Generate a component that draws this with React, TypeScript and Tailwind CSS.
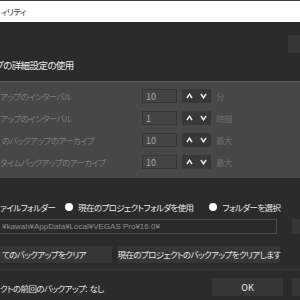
import React from "react";

const rows = [
  { label: "アップのインターバル", value: "10", unit: "分" },
  { label: "アップのインターバル", value: "1", unit: "時間" },
  { label: "のバックアップのアーカイブ", value: "10", unit: "最大", pad: "pl-[2px]" },
  { label: "タイムバックアップのアーカイブ", value: "10", unit: "最大" },
];

function Spinner() {
  return (
    <div className="flex h-[14px] w-[29px] items-center justify-around bg-[#383838]">
      <svg width="7" height="6" viewBox="0 0 7 6">
        <path d="M1 5 L3.5 1.2 L6 5" fill="none" stroke="#ececec" strokeWidth="1.5" />
      </svg>
      <svg width="7" height="6" viewBox="0 0 7 6">
        <path d="M1 1 L3.5 4.8 L6 1" fill="none" stroke="#ececec" strokeWidth="1.5" />
      </svg>
    </div>
  );
}

function Radio({ label }: { label: string }) {
  return (
    <div className="flex shrink-0 items-center gap-[5px]">
      <span className="h-[8px] w-[8px] rounded-full bg-white" />
      <span className="text-[#e8e8e8]">{label}</span>
    </div>
  );
}

export default function App() {
  return (
    <div className="flex h-[300px] w-[300px] flex-col overflow-hidden whitespace-nowrap bg-[#2b2b2b] font-['Noto_Sans_CJK_JP',sans-serif] text-[8.5px] leading-none tracking-[-0.6px] [font-feature-settings:'palt']">
      {/* title bar */}
      <div className="flex h-[22px] shrink-0 items-center border-t border-[#404040] bg-white pl-px text-[#3c3c3c]">
        ィリティ
      </div>

      {/* top section */}
      <div className="flex h-[59px] shrink-0 flex-col">
        <div className="flex justify-end pt-[13px]">
          <div className="h-[18px] w-[12px] bg-[#363636]" />
        </div>
        <div className="mt-[8px] -ml-[5px] text-[9.5px] tracking-[-0.6px] text-[#ececec]">プの詳細設定の使用</div>
      </div>
      <div className="h-px shrink-0 bg-[#5a5a5a]" />

      {/* disabled settings panel */}
      <div className="flex h-[96px] shrink-0 flex-col gap-[8px] bg-[#474747] pt-[7px]">
        {rows.map((r, i) => (
          <div key={i} className="flex h-[14px] items-center">
            <div className={`w-[142px] shrink-0 text-[#7c7c7c] ${r.pad ?? ""}`}>{r.label}</div>
            <div className="flex h-[14px] w-[35px] shrink-0 items-center border border-[#353535] bg-[#444444] pl-[3px] text-[9px] tracking-normal text-[#a8a8a8]">
              {r.value}
            </div>
            <div className="ml-[5px]">
              <Spinner />
            </div>
            <div className="ml-[5px] text-[#6e6e6e]">{r.unit}</div>
          </div>
        ))}
      </div>

      {/* folder choice */}
      <div className="mt-[24px] flex h-[10px] items-center">
        <span className="w-[65px] shrink-0 text-[#e8e8e8]">ァイルフォルダー</span>
        <Radio label="現在のプロジェクトフォルダを使用" />
        <div className="ml-[16px] shrink-0">
          <Radio label="フォルダーを選択" />
        </div>
      </div>

      <div className="mt-[7px] flex h-[15px]">
        <div className="flex w-[277px] shrink-0 items-center border border-l-0 border-[#4c4c4c] pl-[2px] font-['Liberation_Sans',sans-serif] text-[8px] tracking-normal text-[#8e8e8e]">
          ¥kawah¥AppData¥Local¥VEGAS Pro¥16.0¥
        </div>
        <div className="ml-[15px] flex-1 bg-[#363636]" />
      </div>

      <div className="mt-[12px] flex h-[17px] gap-[6px]">
        <div className="flex w-[112px] shrink-0 items-center bg-[#363636] pl-[2px] text-[#e8e8e8]">
          てのバックアップをクリア
        </div>
        <div className="flex w-[162px] shrink-0 items-center justify-center bg-[#363636] text-[#e8e8e8]">
          現在のプロジェクトのバックアップをクリアします
        </div>
      </div>

      <div className="mt-[6px] h-px bg-[#3c3c3c]" />

      <div className="flex flex-1 items-start pt-[8px]">
        <div className="mt-[6px] w-[212px] shrink-0 text-[#e8e8e8]">
          クトの前回のバックアップ:&nbsp;&nbsp;なし
        </div>
        <div className="flex h-[18px] w-[71px] shrink-0 items-center justify-center bg-[#363636] text-[9px] tracking-normal text-[#e8e8e8]">
          OK
        </div>
        <div className="ml-[9px] h-[18px] flex-1 bg-[#363636]" />
      </div>
    </div>
  );
}
